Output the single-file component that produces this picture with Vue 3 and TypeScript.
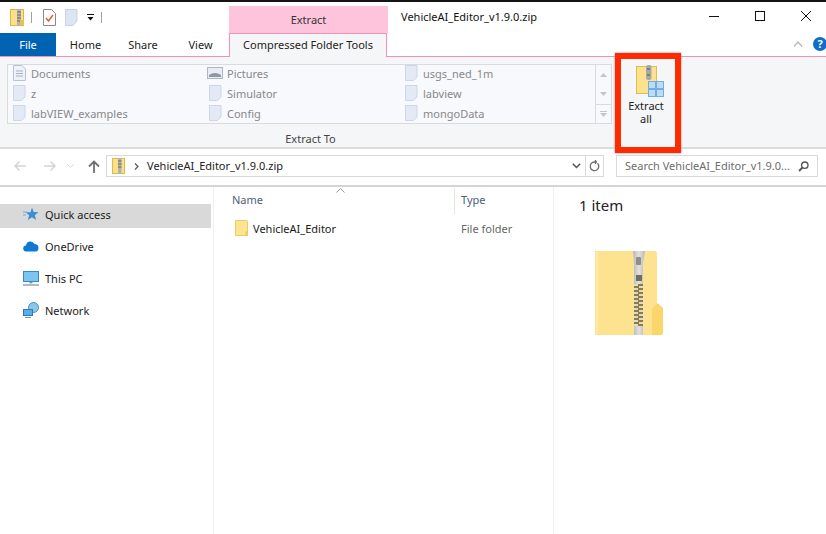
<template>
  <div class="window">
    <div class="top-strip"></div>
    <header class="titlebar">
      <div class="qat">
        <svg width="14" height="17" viewBox="0 0 14 17"><rect x=".5" y=".5" width="13" height="16" fill="#fbe08a" stroke="#d9b64a"/><rect x="7" y="0" width="4" height="17" fill="#b5b3ab"/><path d="M7 3h4M7 6h4M7 9h4M7 12h4" stroke="#6d6a5c"/><rect x="10" y="11" width="4" height="5" fill="#e6c253"/></svg>
        <i class="qat-sep"></i>
        <svg width="13" height="17" viewBox="0 0 13 17"><path d="M.5.500h8l4 4v12H.5z" fill="#fff" stroke="#8a8a8a"/><path d="M3 9l2.500 3L10 6" fill="none" stroke="#e2622c" stroke-width="1.500"/></svg>
        <svg class="qat-doc" width="13" height="17" viewBox="0 0 13 17"><path d="M.5.500h11.500v11.500l-4 4.500H.5z" fill="#dbe5f3" stroke="#c7d2e3"/></svg>
        <svg width="9" height="7" viewBox="0 0 9 7"><path d="M1 .5h7" stroke="#111"/><path d="M1.500 3h6L4.500 6.500z" fill="#111"/></svg>
        <i class="qat-sep last"></i>
      </div>
      <div class="context-tab">Extract</div>
      <div class="title">VehicleAI_Editor_v1.9.0.zip</div>
      <div class="controls">
        <svg width="12" height="12" viewBox="0 0 12 12"><path d="M1 6.500h10" stroke="#111"/></svg>
        <svg width="12" height="12" viewBox="0 0 12 12"><rect x="1.500" y="1.500" width="9" height="9" fill="none" stroke="#111"/></svg>
        <svg width="12" height="12" viewBox="0 0 12 12"><path d="M1 1l10 10M11 1L1 11" stroke="#111"/></svg>
      </div>
    </header>

    <nav class="tabs">
      <div class="tab file">File</div>
      <div class="tab">Home</div>
      <div class="tab">Share</div>
      <div class="tab">View</div>
      <div class="tab active">Compressed Folder Tools</div>
      <div class="tab-right">
        <svg width="10" height="6" viewBox="0 0 10 6"><path d="M1 5.500L5 1l4 4.500" fill="none" stroke="#b5b5b5" stroke-width="1.200"/></svg>
        <span class="help">?</span>
      </div>
    </nav>

    <section class="ribbon">
      <div class="extract-to">
        <div class="gallery">
          <div class="gallery-list">
            <div v-for="item in galleryItems" :key="item.name" class="gallery-item">
              <span class="gallery-icon">
                <svg v-if="item.icon === 'doc'" width="13" height="16" viewBox="0 0 13 16"><path d="M.5.500h8.500l3.500 3.500v11.500H.5z" fill="#eef2f8" stroke="#b9c3d2"/><path d="M3 6h7M3 8.500h7M3 11h7" stroke="#a7b2c2"/></svg>
                <svg v-else-if="item.icon === 'pic'" width="16" height="12" viewBox="0 0 16 12"><rect x=".5" y=".5" width="15" height="11" fill="#e8edf3" stroke="#aeb6c1"/><path d="M2 8q6-4 12 0v2H2z" fill="#8c98a8"/></svg>
                <svg v-else width="13" height="16" viewBox="0 0 13 16"><path d="M.5.500h11.500v11.500l-3.500 3.500H.5z" fill="#e3eaf5" stroke="#cbd6e6"/></svg>
              </span>
              <span>{{ item.name }}</span>
            </div>
          </div>
          <div class="gallery-scroll">
            <div><svg width="7" height="4" viewBox="0 0 7 4"><path d="M0 4L3.500 0 7 4z" fill="#c5c5c5"/></svg></div>
            <div><svg width="7" height="4" viewBox="0 0 7 4"><path d="M0 0L3.500 4 7 0z" fill="#c5c5c5"/></svg></div>
            <div><svg width="7" height="6" viewBox="0 0 7 6"><path d="M0 .5h7" stroke="#c5c5c5"/><path d="M0 2L3.500 6 7 2z" fill="#c5c5c5"/></svg></div>
          </div>
        </div>
        <div class="group-label">Extract To</div>
      </div>
      <div class="extract-all">
        <svg width="28" height="32" viewBox="0 0 28 32"><rect x=".5" y="1.500" width="20" height="27" fill="#fbe28f" stroke="#e0bd4d"/><rect x="10" y="0" width="5.500" height="15" rx="2" fill="#a8a8a8"/><path d="M11 4h3M11 10h3" stroke="#555"/><g fill="#bcdcf5" stroke="#71aee0"><rect x="12.500" y="16.500" width="7" height="7"/><rect x="20.500" y="16.500" width="7" height="7"/><rect x="12.500" y="24.500" width="7" height="7"/><rect x="20.500" y="24.500" width="7" height="7"/></g></svg>
        <span>Extract<br>all</span>
      </div>
      <div class="highlight"></div>
    </section>

    <section class="navbar">
      <div class="nav-arrows">
        <svg width="14" height="12" viewBox="0 0 14 12"><path d="M13 6H2M6.500 1.500L2 6l4.500 4.500" fill="none" stroke="#d4d4d4" stroke-width="1.500"/></svg>
        <svg width="14" height="12" viewBox="0 0 14 12"><path d="M1 6h11M7.500 1.500L12 6l-4.500 4.500" fill="none" stroke="#d4d4d4" stroke-width="1.500"/></svg>
        <svg width="7" height="4" viewBox="0 0 7 4"><path d="M.5.500l3 3 3-3" fill="none" stroke="#d4d4d4"/></svg>
        <svg width="12" height="13" viewBox="0 0 12 13"><path d="M6 13V2M1 6.500L6 1.500l5 5" fill="none" stroke="#707070" stroke-width="1.800"/></svg>
      </div>
      <div class="address">
        <svg width="13" height="16" viewBox="0 0 13 16"><rect x=".5" y=".5" width="12" height="15" fill="#fbe08a" stroke="#dfba4a"/><rect x="6" y="0" width="3.500" height="16" fill="#b5b3ab"/><path d="M6 3h3.500M6 6h3.500M6 9h3.500" stroke="#666"/></svg>
        <svg class="crumb" width="5" height="7" viewBox="0 0 5 7"><path d="M1 .5l3 3-3 3" fill="none" stroke="#555" stroke-width="1.200"/></svg>
        <span class="path">VehicleAI_Editor_v1.9.0.zip</span>
        <svg class="drop" width="9" height="6" viewBox="0 0 9 6"><path d="M.8.800l3.700 3.700L8.200.800" fill="none" stroke="#555" stroke-width="1.500"/></svg>
      </div>
      <div class="refresh">
        <svg width="11" height="12" viewBox="0 0 11 12"><path d="M8.500 3.200A4.300 4.300 0 1 1 5.500 2H8M6.500 0v4" fill="none" stroke="#6c6c6c" stroke-width="1.300"/></svg>
      </div>
      <div class="search">
        <span>Search VehicleAI_Editor_v1.9.0...</span>
        <svg width="11" height="11" viewBox="0 0 11 11"><circle cx="6.800" cy="4.200" r="3.200" fill="none" stroke="#555" stroke-width="1.300"/><path d="M4.500 6.500L1 10" stroke="#555" stroke-width="1.800"/></svg>
      </div>
    </section>

    <main class="content">
      <aside class="sidebar">
        <div v-for="place in places" :key="place.name" class="place" :class="{ selected: place.selected }">
          <svg v-if="place.icon === 'star'" width="16" height="15" viewBox="0 0 16 15"><path d="M9 .5l1.700 4.500 4.800.2-3.700 3 1.300 4.800L9 10.300 4.800 13l1.300-4.800-3.600-3h5z" fill="#3a8fd6"/><path d="M0 5h4M0 8h3" stroke="#67b0e6"/></svg>
          <svg v-else-if="place.icon === 'cloud'" width="16" height="11" viewBox="0 0 16 11"><path d="M3.500 10.500a3 3 0 0 1-.5-6A4.500 4.500 0 0 1 11.500 3a3.800 3.800 0 0 1 4 4 3.500 3.500 0 0 1-2 3.500z" fill="#0f78d4"/></svg>
          <svg v-else-if="place.icon === 'pc'" width="16" height="15" viewBox="0 0 16 15"><rect x=".5" y=".5" width="15" height="10" fill="#7cc5f2" stroke="#3b87c4"/><path d="M6.500 11h3v1.500h-3z" fill="#7f9ab0"/><path d="M0 14h16" stroke="#93a6b5" stroke-width="1.500"/></svg>
          <svg v-else width="16" height="16" viewBox="0 0 16 16"><circle cx="10.500" cy="5.500" r="5" fill="#8ec6ea" stroke="#4c8fbf"/><rect x=".5" y="7.500" width="9" height="6" fill="#58aee6" stroke="#2f78b0"/><path d="M2 15.500h6" stroke="#7a93a6"/></svg>
          <span>{{ place.name }}</span>
        </div>
      </aside>

      <div class="files">
        <div class="file-head">
          <svg class="sort" width="9" height="5" viewBox="0 0 9 5"><path d="M.5 4.500l4-4 4 4" fill="none" stroke="#9a9a9a"/></svg>
          <div class="col-name">Name</div>
          <div class="col-type">Type</div>
        </div>
        <div class="file-row">
          <div class="col-name row-name">
            <svg width="13" height="16" viewBox="0 0 13 16"><path d="M.5.500h11a1 1 0 0 1 1 1v14H.5z" fill="#fde491" stroke="#eccb64"/><path d="M10.500 15.500v-4l2-1v5z" fill="#f0c85e"/></svg>
            <span>VehicleAI_Editor</span>
          </div>
          <div class="col-type muted">File folder</div>
        </div>
      </div>

      <aside class="details">
        <div class="count">1 item</div>
        <svg class="big-zip" width="68" height="84" viewBox="0 0 68 84">
          <defs>
            <linearGradient id="zip-metal" x1="0" x2="1" y1="0" y2="0">
              <stop offset="0" stop-color="#b9b8b3"/>
              <stop offset=".5" stop-color="#e2e1dd"/>
              <stop offset="1" stop-color="#b9b8b3"/>
            </linearGradient>
          </defs>
          <path d="M0 0h60a2 2 0 0 1 2 2v82H0z" fill="#fde38f"/>
          <path d="M1 1h2v82H1z" fill="#fdeaa8"/>
          <path d="M57 84V58l5.500-6 5.500 5v25a2 2 0 0 1-2 2z" fill="#fdd66b"/>
          <path d="M38 0h12l-2 12v72h-9V12z" fill="url(#zip-metal)"/>
          <rect x="41" y="6" width="5" height="8" rx="1" fill="#8e8e8c"/>
          <rect x="41" y="24" width="6" height="6" fill="#6f6d65"/>
          <rect x="39" y="33" width="9" height="42" fill="#8f7b3d"/>
          <path d="M41 33v42" stroke="#dcdbd6" stroke-width="4" stroke-dasharray="2 2"/>
          <path d="M46 35v40" stroke="#dcdbd6" stroke-width="4" stroke-dasharray="2 2"/>
        </svg>
      </aside>
    </main>
  </div>
</template>

<script setup lang="ts">
interface GalleryItem {
  name: string
  icon: 'doc' | 'pic' | 'blank'
}

interface Place {
  name: string
  icon: 'star' | 'cloud' | 'pc' | 'net'
  selected?: boolean
}

// filled column by column, three rows each
const galleryItems: GalleryItem[] = [
  { name: 'Documents', icon: 'doc' },
  { name: 'z', icon: 'blank' },
  { name: 'labVIEW_examples', icon: 'blank' },
  { name: 'Pictures', icon: 'pic' },
  { name: 'Simulator', icon: 'blank' },
  { name: 'Config', icon: 'blank' },
  { name: 'usgs_ned_1m', icon: 'blank' },
  { name: 'labview', icon: 'blank' },
  { name: 'mongoData', icon: 'blank' },
]

const places: Place[] = [
  { name: 'Quick access', icon: 'star', selected: true },
  { name: 'OneDrive', icon: 'cloud' },
  { name: 'This PC', icon: 'pc' },
  { name: 'Network', icon: 'net' },
]
</script>

<style>
html, body { margin: 0; background: #fff; overflow: hidden; }
</style>

<style scoped>
.window {
  width: 826px;
  height: 534px;
  display: flex;
  flex-direction: column;
  background: #fff;
  color: #1a1a1a;
  font-family: "Noto Sans", "Open Sans", sans-serif;
  font-size: 11px;
  overflow: hidden;
}
svg { display: block; flex: none; }
.top-strip { height: 2px; background: #141414; }

.titlebar { height: 31px; display: flex; position: relative; }
.qat { width: 229px; display: flex; align-items: center; padding: 0 0 1px 10px; box-sizing: border-box; }
.qat-sep { width: 1px; height: 11px; background: #a0a0a0; margin: 0 11px 0 7px; }
.qat-sep.last { margin: 0 0 0 6px; }
.qat-doc { margin: 0 8px 0 9px; }
.context-tab {
  width: 159px;
  margin-top: 4px;
  background: #fdc4dc;
  text-align: center;
  line-height: 27px;
  color: #333;
}
.title { margin-left: 13px; line-height: 30px; color: #111; }
.controls { margin-left: auto; display: flex; align-items: center; gap: 34px; padding: 0 14px 3px 0; }

.tabs { height: 24px; display: flex; box-sizing: border-box; border-bottom: 1px solid #f48fb8; }
.tab { line-height: 23px; text-align: center; width: 57px; color: #222; }
.tab:nth-child(2) { margin-left: 1px; }
.tab:nth-child(3) { width: 58px; }
.tab.file { width: 56px; background: #0063b1; color: #fff; height: 23px; }
.tab.active {
  width: 158px;
  height: 24px;
  box-sizing: border-box;
  border: 1px solid #f48fb8;
  border-bottom: 0;
  background: #f5f6f7;
  line-height: 22px;
}
.tab-right { margin-left: auto; display: flex; align-items: center; gap: 10px; padding: 0 0 2px 0; }
.help {
  width: 14px;
  height: 14px;
  margin-right: -1px;
  border-radius: 50%;
  background: #0f6fc6;
  color: #fff;
  font-size: 11px;
  font-weight: 700;
  line-height: 14px;
  text-align: center;
}

.ribbon {
  height: 92px;
  display: flex;
  position: relative;
  box-sizing: border-box;
  background: #f5f6f7;
  border-bottom: 2px solid #dcdcdc;
}
.extract-to { width: 616px; padding: 7px 0 0 7px; box-sizing: border-box; }
.gallery {
  width: 605px;
  height: 60px;
  display: flex;
  box-sizing: border-box;
  border: 1px solid #dadbdc;
  background: #f7f9fc;
}
.gallery-list {
  flex: 1;
  display: grid;
  grid-auto-flow: column;
  grid-template-columns: 196px 196px 1fr;
  grid-template-rows: repeat(3, 20px);
  margin-top: -2px;
}
.gallery-item { display: flex; align-items: center; gap: 3px; padding-left: 2px; color: #888; }
.gallery-icon { width: 18px; display: flex; justify-content: center; }
.gallery-scroll { width: 15px; border-left: 1px solid #dadbdc; display: flex; flex-direction: column; }
.gallery-scroll div { height: 20px; display: flex; align-items: center; justify-content: center; }
.gallery-scroll div:last-child { border-top: 1px solid #dadbdc; box-sizing: border-box; }
.group-label { text-align: center; padding-top: 7px; padding-right: 2px; color: #444; }
.extract-all {
  width: 64px;
  display: flex;
  flex-direction: column;
  align-items: center;
  padding: 8px 4px 0 0;
  box-sizing: border-box;
  line-height: 13px;
  text-align: center;
  color: #222;
}
.extract-all svg { margin: 0 0 2px 8px; }
.highlight {
  position: absolute;
  left: 615px;
  top: -4px;
  width: 66px;
  height: 100px;
  box-sizing: border-box;
  border: 6px solid #ff2a00;
  box-shadow: 0 0 2px #888;
}

.navbar { height: 38px; display: flex; align-items: flex-start; box-sizing: border-box; padding-top: 6px; border-bottom: 2px solid #d5d5d5; }
.nav-arrows { width: 106px; height: 22px; display: flex; align-items: center; padding-left: 13px; box-sizing: border-box; }
.nav-arrows svg:nth-child(2) { margin-left: 16px; }
.nav-arrows svg:nth-child(3) { margin-left: 10px; }
.nav-arrows svg:nth-child(4) { margin-left: 14px; }
.address {
  width: 480px;
  height: 22px;
  display: flex;
  align-items: center;
  box-sizing: border-box;
  padding-left: 5px;
  border: 1px solid #d9d9d9;
}
.crumb { margin: 0 8px 0 9px; }
.path { color: #222; padding-bottom: 1px; }
.drop { margin-left: auto; margin-right: 4px; }
.refresh {
  width: 18px;
  height: 22px;
  display: flex;
  align-items: center;
  justify-content: center;
  box-sizing: border-box;
  border: 1px solid #d9d9d9;
  border-left: 0;
}
.search {
  width: 202px;
  height: 22px;
  margin-left: 12px;
  display: flex;
  align-items: center;
  justify-content: space-between;
  box-sizing: border-box;
  padding: 0 8px;
  border: 1px solid #d9d9d9;
  color: #6d6d6d;
}
.search span { padding-bottom: 1px; }

.content { flex: 1; display: flex; min-height: 0; }
.sidebar { width: 214px; padding-top: 17px; box-sizing: border-box; border-right: 1px solid #f0f0f0; }
.place {
  height: 24px;
  width: 211px;
  margin-bottom: 8px;
  display: flex;
  align-items: center;
  gap: 6px;
  padding: 0 0 4px 23px;
  box-sizing: border-box;
}
.place.selected { background: #d9d9d9; }
.files { width: 340px; box-sizing: border-box; border-right: 1px solid #f0f0f0; padding-top: 1px; }
.file-head { position: relative; display: flex; height: 26px; }
.sort { position: absolute; left: 122px; top: 0; }
.col-name { width: 241px; padding-left: 18px; box-sizing: border-box; }
.file-head .col-name { line-height: 23px; color: #4c607a; border-right: 1px solid #e5e5e5; }
.col-type { padding-left: 6px; }
.file-head .col-type { line-height: 23px; color: #4c607a; }
.file-row { display: flex; align-items: center; height: 20px; margin-top: 4px; }
.row-name { display: flex; align-items: center; gap: 5px; padding-left: 21px; }
.muted { color: #666; }
.details { flex: 1; padding: 8px 0 0 25px; }
.count { font-size: 15px; line-height: 20px; color: #222; }
.big-zip { margin: 36px 0 0 16px; }
</style>
